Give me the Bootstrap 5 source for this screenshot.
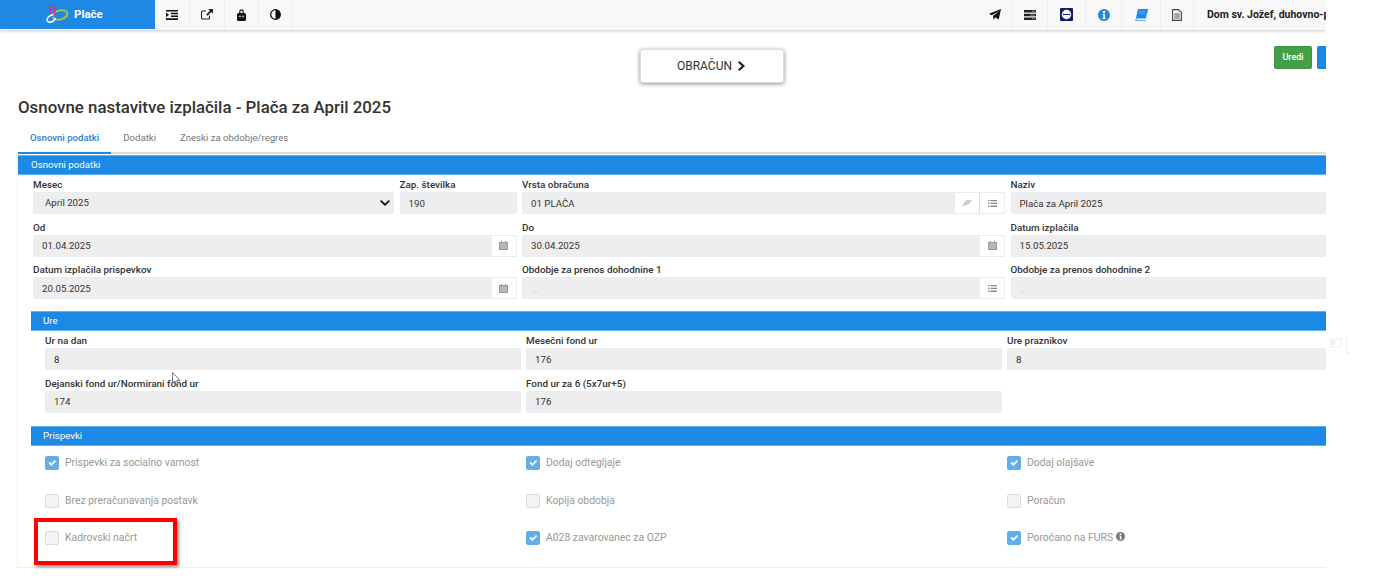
<!DOCTYPE html>
<html lang="sl">
<head>
<meta charset="utf-8">
<title>Plače</title>
<link href="https://cdn.jsdelivr.net/npm/bootstrap@5.3.0/dist/css/bootstrap.min.css" rel="stylesheet">
<style>
html,body{height:588px;overflow:hidden;background:#fff}
body{font-family:Roboto,"Liberation Sans",sans-serif;font-size:9.7px;color:#333}
.shell{width:1326px;height:588px;overflow:hidden;position:relative;background:#fff}
.topbar{height:30px;background:#f8f8f8;box-shadow:0 1px 3px rgba(0,0,0,.22);padding:0;flex-wrap:nowrap;justify-content:flex-start}
.brandbox{width:155px;height:29px;background:#1e88e5;color:#fff;font-size:11.5px;font-weight:700;gap:5px;padding-left:45px;margin:0 0 1px}
.cell{height:29px;border-right:1px solid #eee;justify-content:center;color:#111;flex:none}
.cell svg{display:block}
.orgname{font-size:10.5px;font-weight:700;color:#222;white-space:nowrap;padding-left:13px}
.toolrow{height:54px;padding-left:97px}
.calcbtn{width:144px;height:34px;margin-top:19px;background:#fff;border:1px solid #ddd;border-radius:3px;box-shadow:0 1px 4px rgba(0,0,0,.45);font-size:12px;color:#333;gap:6px;padding:0}
.minibtn{height:23px;font-size:9px;font-weight:500;color:#fff;border-radius:2px;padding:0;border:1px solid rgba(0,0,0,.08)}
.bgreen{width:38px;background:#43a047}.bblue{width:38px;background:#1e88e5}
.headline{font-size:16.85px;font-weight:500;color:#333;margin:0 0 0 18px;line-height:22px;padding-top:12px}
.tabline{margin:10px 0 0 18px;height:26px;border-bottom:2px solid #ddd;flex-wrap:nowrap}
.tabline .nav-link{font-size:9.6px;color:#777;padding:0 12px;height:26px;line-height:19px;border:0;margin:0;border-radius:0;background:none}
.tabline .nav-link.active{color:#2f7fd8;font-weight:500;box-shadow:inset 0 -2px 0 #1e88e5}
.sheet{height:413px;border-left:1px solid #f3f3f3;border-bottom:1px solid #eee;margin-left:17px}
.bandhead{background:#1e88e5;color:#fff;font-size:9.7px;height:20px;line-height:18px;border-top:1px solid #64b0ee;border-bottom:1px solid #64b0ee}
.bandtop{margin-top:1px;padding-left:13px}
.bandsub{margin-left:13px;margin-top:6.5px;padding-left:12px}
.bandlast{margin-top:8px}
.gridone{display:grid;grid-template-columns:361px 117px 483px 483px;column-gap:5.5px;padding:2px 0 0 15px}
.gridone .span2{grid-column:span 2}
.gridtwo{display:grid;grid-template-columns:476px 476px 476px;column-gap:5px;padding:2px 0 0 27px}
.fieldbox{height:42.5px;width:100%}
.fieldbox label{display:block;font-weight:500;font-size:9.9px;line-height:14px;height:15px;margin:0;padding-top:1px;color:#333;white-space:nowrap}
.fieldbox .form-control,.fieldbox .form-select{height:22px;min-height:0;background-color:#eee;border:1px solid #e9edf2;border-radius:2px;font-size:9.7px;color:#333;padding:0 8px;line-height:20px;box-shadow:none}
.fieldbox .form-select{padding-left:11px;background-size:10px 10px;background-position:right 3px center;--bs-form-select-bg-img:url("data:image/svg+xml,%3csvg xmlns='http://www.w3.org/2000/svg' viewBox='0 0 16 16'%3e%3cpath fill='none' stroke='%23111' stroke-linecap='round' stroke-linejoin='round' stroke-width='3' d='m2 5 6 6 6-6'/%3e%3c/svg%3e")}
.fieldbox .form-control::placeholder{color:#bbb}
.addon{width:26px;height:22px;padding:0;background:#fff;border:1px solid #e9edf2;border-left-color:#ddd;border-radius:0;display:flex;align-items:center;justify-content:center;color:#888}
.gridchk{display:grid;grid-template-columns:476px 476px 476px;column-gap:5px;padding-left:27px;margin-top:8px;row-gap:0}
.chkitem{height:37.5px;margin:0;padding:0;display:flex;align-items:flex-start;gap:6px;min-height:0;padding-top:2px}
.chkitem .form-check-input{width:14px;height:14px;margin:0;float:none;border-radius:2px;border:1px solid #ddd;background-color:#f3f3f3;opacity:1;flex:none}
.chkitem .form-check-input:checked{background-color:#63ade9;border-color:#63ade9}
.chkitem .form-check-input[disabled]~.form-check-label{color:#999;font-size:10.4px;line-height:14px;opacity:1}
.redmark{position:absolute;left:34px;top:518px;width:143px;height:47px;border:4px solid #f00;box-shadow:2px 2px 3px rgba(0,0,0,.45);pointer-events:none}
.ghosticon{position:absolute;left:1330px;top:337px}
.pointer{position:absolute;left:172px;top:372px}
</style>
</head>
<body>
<div class="shell">
  <nav class="navbar topbar align-items-start">
    <a class="brandbox d-flex align-items-center text-decoration-none" href="#">
      <svg width="24" height="19" viewBox="0 0 24 19"><ellipse cx="15" cy="10" rx="7.500" ry="4.500" fill="none" stroke="#a8c62f" stroke-width="2" transform="rotate(-14 15 10)"/><path d="M7.500 12C5 8 4 3 6.500 1.800 9 .8 10.500 3.500 10 6.500 9.600 8.500 8.500 10 7 11" fill="none" stroke="#d8317f" stroke-width="1.700"/><path d="M8.500 9.500C5 10 2 12.500 2 15c0 2 3 2.800 5.500 1.500 1.500-.8 2.500-2 3-3.500" fill="none" stroke="#f2f8ff" stroke-width="1.600"/></svg>
      <span>Plače</span>
    </a>
    <div class="cell d-flex align-items-center" style="width:35px"><svg width="12" height="10" viewBox="0 0 12 10"><path d="M0 0h12v1.600H0zM5 2.700h7v1.600H5zM5 5.400h7V7H5zM0 8.200h12V10H0zM0 2.700l3 2.100-3 2.100z" fill="#111"/></svg></div>
    <div class="cell d-flex align-items-center" style="width:35px"><svg width="12" height="11" viewBox="0 0 12 11"><path d="M8.500 6.500V9a1 1 0 0 1-1 1H1.500a1 1 0 0 1-1-1V3a1 1 0 0 1 1-1H5" fill="none" stroke="#222" stroke-width="1.100"/><path d="M7.200 0H12v4.800l-1.700-1.700L6.600 6.800 5.200 5.400l3.700-3.700z" fill="#222"/></svg></div>
    <div class="cell d-flex align-items-center" style="width:34px"><svg width="9" height="12" viewBox="0 0 9 12"><path d="M2.800 4V2.500a1.700 1.700 0 0 1 3.400 0V4" fill="none" stroke="#111" stroke-width="1.200"/><rect x="0" y="4" width="9" height="8" rx="1.500" fill="#111"/><circle cx="2.900" cy="7.300" r=".9" fill="#ddd"/><circle cx="6.100" cy="7.300" r=".9" fill="#ddd"/></svg></div>
    <div class="cell d-flex align-items-center" style="width:33px"><svg width="11" height="11" viewBox="0 0 11 11"><circle cx="5.500" cy="5.500" r="4.800" fill="#fff" stroke="#111" stroke-width="1.300"/><path d="M5.500 .7a4.800 4.800 0 0 1 0 9.600z" fill="#111"/></svg></div>
    <div class="ms-auto d-flex flex-nowrap">
      <div class="cell d-flex align-items-center" style="width:36px"><svg width="12" height="11" viewBox="0 0 12 11"><path d="M12 0 9.700 10.500 6.300 8.300 4.700 11 4 7 10 2 2.800 6.300 0 4.800z" fill="#111"/></svg></div>
      <div class="cell d-flex align-items-center" style="width:35px"><svg width="12" height="10" viewBox="0 0 12 10"><path d="M0 0h12v2.600H0zM0 3.700h12v2.600H0zM0 7.400h12V10H0z" fill="#222"/><path d="M8 1.300h3M6 5h5M8 8.700h3" stroke="#aaa" stroke-width=".8"/></svg></div>
      <div class="cell d-flex align-items-center" style="width:38px"><svg width="13" height="13" viewBox="0 0 13 13"><rect width="13" height="13" rx="1" fill="#0b1f6b"/><circle cx="6.500" cy="6.500" r="4.700" fill="#fff"/><path d="M2.500 6.500l1.500-1v.6h5v-.6l1.500 1-1.500 1v-.6H4v.6z" fill="#0b1f6b"/></svg></div>
      <div class="cell d-flex align-items-center" style="width:36px"><svg width="12" height="12" viewBox="0 0 12 12"><circle cx="6" cy="6" r="6" fill="#1e88e5"/><circle cx="6" cy="3" r="1.200" fill="#fff"/><path d="M4.500 5h2.400v4h.8v1H4.400V9h.9V6h-.8z" fill="#fff"/></svg></div>
      <div class="cell d-flex align-items-center" style="width:39px"><svg width="13" height="12" viewBox="0 0 13 12"><path d="M3 0h10l-2.200 9.300H1.300L0 10.300C0 11.500.8 12 2 12h8.800l.3-1H2.500c-1 0-1-.9-.1-1h8.700L13 1.500" fill="#63ade9"/><path d="M3 0h10l-2.400 9H1z" fill="#1e88e5"/><path d="M4.500 2.500h6M4 4.500h6" stroke="#8cc4f2" stroke-width=".5"/></svg></div>
      <div class="cell d-flex align-items-center" style="width:33px"><svg width="10" height="12" viewBox="0 0 10 12"><path d="M.6.600h5.800l3 3v7.800H.6z" fill="#f4f4f4" stroke="#444" stroke-width="1.100"/><path d="M2.300 5h5.400M2.300 7h5.400M2.300 9h5.400" stroke="#444" stroke-width=".9"/></svg></div>
      <div class="orgname d-flex align-items-center" style="width:132px;height:29px;overflow:hidden">Dom sv. Jožef, duhovno-p</div>
    </div>
  </nav>

  <div class="toolrow d-flex justify-content-center">
    <button class="btn calcbtn d-flex align-items-center justify-content-center" type="button">OBRAČUN <svg width="8" height="10" viewBox="0 0 8 10"><path d="M1.500 0 7 5 1.500 10 0 8.500 3.800 5 0 1.500z" fill="#222"/></svg></button>
  </div>
  <div class="d-flex position-absolute" style="left:1274px;top:46px;gap:5px">
    <button class="btn minibtn bgreen" type="button">Uredi</button>
    <button class="btn minibtn bblue" type="button" aria-label="Shrani"></button>
  </div>

  <h1 class="headline">Osnovne nastavitve izplačila - Plača za April 2025</h1>
  <ul class="nav tabline">
    <li class="nav-item"><a class="nav-link active" href="#">Osnovni podatki</a></li>
    <li class="nav-item"><a class="nav-link" href="#">Dodatki</a></li>
    <li class="nav-item"><a class="nav-link" href="#">Zneski za obdobje/regres</a></li>
  </ul>

  <div class="sheet">
    <div class="bandhead bandtop">Osnovni podatki</div>
    <div class="gridone">
      <div class="fieldbox"><label>Mesec</label><select class="form-select" disabled><option>April 2025</option></select></div>
      <div class="fieldbox"><label>Zap. številka</label><input class="form-control" value="190" disabled></div>
      <div class="fieldbox"><label>Vrsta obračuna</label><div class="input-group flex-nowrap"><input class="form-control" value="01 PLAČA" disabled><span class="addon"><svg width="10" height="6" viewBox="0 0 10 6"><path d="M4 0h6L7 4 2.500 5.500 0 6z" fill="#ccc"/></svg></span><span class="addon"><svg width="9" height="7" viewBox="0 0 9 7"><path d="M0 0h1.500v1.300H0zM2.500 0H9v1.300H2.500zM0 2.800h1.500v1.300H0zM2.500 2.800H9v1.300H2.500zM0 5.600h1.500v1.300H0zM2.500 5.600H9v1.300H2.500z" fill="#888"/></svg></span></div></div>
      <div class="fieldbox"><label>Naziv</label><input class="form-control" value="Plača za April 2025" disabled></div>

      <div class="fieldbox span2"><label>Od</label><div class="input-group flex-nowrap"><input class="form-control" value="01.04.2025" disabled><span class="addon"><svg width="9" height="9" viewBox="0 0 9 9"><path d="M0 1h9v8H0zM2 0h1v1.500H2zM6 0h1v1.500H6z" fill="#999"/><path d="M1 3h7M1 5h7M1 7h7" stroke="#fff" stroke-width=".6"/></svg></span></div></div>
      <div class="fieldbox"><label>Do</label><div class="input-group flex-nowrap"><input class="form-control" value="30.04.2025" disabled><span class="addon"><svg width="9" height="9" viewBox="0 0 9 9"><path d="M0 1h9v8H0zM2 0h1v1.500H2zM6 0h1v1.500H6z" fill="#999"/><path d="M1 3h7M1 5h7M1 7h7" stroke="#fff" stroke-width=".6"/></svg></span></div></div>
      <div class="fieldbox"><label>Datum izplačila</label><input class="form-control" value="15.05.2025" disabled></div>

      <div class="fieldbox span2"><label>Datum izplačila prispevkov</label><div class="input-group flex-nowrap"><input class="form-control" value="20.05.2025" disabled><span class="addon"><svg width="9" height="9" viewBox="0 0 9 9"><path d="M0 1h9v8H0zM2 0h1v1.500H2zM6 0h1v1.500H6z" fill="#999"/><path d="M1 3h7M1 5h7M1 7h7" stroke="#fff" stroke-width=".6"/></svg></span></div></div>
      <div class="fieldbox"><label>Obdobje za prenos dohodnine 1</label><div class="input-group flex-nowrap"><input class="form-control" placeholder="..." disabled><span class="addon"><svg width="9" height="7" viewBox="0 0 9 7"><path d="M0 0h1.500v1.300H0zM2.500 0H9v1.300H2.500zM0 2.800h1.500v1.300H0zM2.500 2.800H9v1.300H2.500zM0 5.600h1.500v1.300H0zM2.500 5.600H9v1.300H2.500z" fill="#888"/></svg></span></div></div>
      <div class="fieldbox"><label>Obdobje za prenos dohodnine 2</label><input class="form-control" placeholder="..." disabled></div>
    </div>

    <div class="bandhead bandsub">Ure</div>
    <div class="gridtwo">
      <div class="fieldbox"><label>Ur na dan</label><input class="form-control" value="8" disabled></div>
      <div class="fieldbox"><label>Mesečni fond ur</label><input class="form-control" value="176" disabled></div>
      <div class="fieldbox"><label>Ure praznikov</label><input class="form-control" value="8" disabled></div>
      <div class="fieldbox"><label>Dejanski fond ur/Normirani fond ur</label><input class="form-control" value="174" disabled></div>
      <div class="fieldbox"><label>Fond ur za 6 (5x7ur+5)</label><input class="form-control" value="176" disabled></div>
    </div>

    <div class="bandhead bandsub bandlast">Prispevki</div>
    <div class="gridchk">
      <div class="form-check chkitem"><input class="form-check-input" type="checkbox" checked disabled id="c1"><label class="form-check-label" for="c1">Prispevki za socialno varnost</label></div>
      <div class="form-check chkitem"><input class="form-check-input" type="checkbox" checked disabled id="c2"><label class="form-check-label" for="c2">Dodaj odtegljaje</label></div>
      <div class="form-check chkitem"><input class="form-check-input" type="checkbox" checked disabled id="c3"><label class="form-check-label" for="c3">Dodaj olajšave</label></div>
      <div class="form-check chkitem"><input class="form-check-input" type="checkbox" disabled id="c4"><label class="form-check-label" for="c4">Brez preračunavanja postavk</label></div>
      <div class="form-check chkitem"><input class="form-check-input" type="checkbox" disabled id="c5"><label class="form-check-label" for="c5">Kopija obdobja</label></div>
      <div class="form-check chkitem"><input class="form-check-input" type="checkbox" disabled id="c6"><label class="form-check-label" for="c6">Poračun</label></div>
      <div class="form-check chkitem"><input class="form-check-input" type="checkbox" disabled id="c7"><label class="form-check-label" for="c7">Kadrovski načrt</label></div>
      <div class="form-check chkitem"><input class="form-check-input" type="checkbox" checked disabled id="c8"><label class="form-check-label" for="c8">A028 zavarovanec za OZP</label></div>
      <div class="form-check chkitem"><input class="form-check-input" type="checkbox" checked disabled id="c9"><label class="form-check-label" for="c9">Poročano na FURS <svg width="9" height="9" viewBox="0 0 12 12" class="align-baseline"><circle cx="6" cy="6" r="6" fill="#777"/><circle cx="6" cy="3" r="1.300" fill="#fff"/><path d="M4.500 5h2.500v4h.8v1H4.400V9h.9V6h-.8z" fill="#fff"/></svg></label></div>
    </div>
  </div>

  <svg class="pointer" width="9" height="14" viewBox="0 0 9 14"><path d="M.5.500v10.500l2.500-2 1.700 4 1.500-.6-1.600-3.900H8z" fill="#fff" stroke="#555" stroke-width=".8"/></svg>
  <div class="redmark"></div>
</div>
<svg class="ghosticon" width="20" height="17" viewBox="0 0 20 17"><path d="M0 2h11v8H0z" fill="none" stroke="#eee"/><path d="M1 3h4v5H1z" fill="#eee"/><path d="M15 0h4M15 16h4M17 0v16" stroke="#eee"/></svg>
<script src="https://cdn.jsdelivr.net/npm/bootstrap@5.3.0/dist/js/bootstrap.bundle.min.js"></script>
</body>
</html>
